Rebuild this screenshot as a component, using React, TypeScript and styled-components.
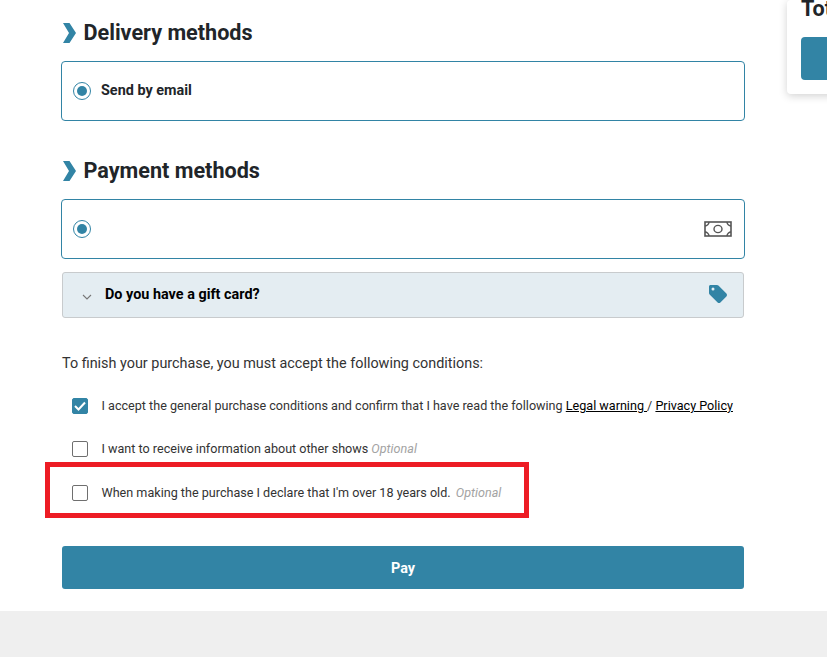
import React from 'react'
import styled, {createGlobalStyle} from 'styled-components'

const teal = '#3284a5'

const GlobalStyle = createGlobalStyle`
  html, body {
    margin: 0;
    padding: 0;
    background: #fff;
    overflow: hidden;
  }
  body {
    font-family: Roboto, 'Liberation Sans', sans-serif;
    color: #212529;
  }
`

const Page = styled.div`
  width: 827px;
  height: 657px;
  display: flex;
  flex-direction: column;
  overflow: hidden;
`

const Content = styled.div`
  height: 611px;
  display: flex;
  align-items: flex-start;
  padding-left: 61px;
  box-sizing: border-box;
  flex-shrink: 0;
`

const Main = styled.main`
  width: 684px;
  flex-shrink: 0;
  padding-top: 20px;
`

const Aside = styled.aside`
  width: 200px;
  height: 94px;
  flex-shrink: 0;
  margin-left: 42px;
  padding: 0 14px;
  box-sizing: border-box;
  background: #fff;
  border-radius: 4px;
  box-shadow: 0 2px 8px rgba(0, 0, 0, 0.18);
`

const TotalLabel = styled.div`
  font-size: 21.6px;
  font-weight: 700;
  line-height: 18px;
  color: #212529;
`

const TotalButton = styled.div`
  margin-top: 19px;
  height: 43px;
  border-radius: 4px;
  background: ${teal};
`

const Heading = styled.h2`
  margin: 0;
  height: 26px;
  display: flex;
  align-items: center;
  gap: 6.5px;
  font-size: 21.6px;
  line-height: 26px;
  font-weight: 700;
  color: #212529;
`

const Chevron = styled.svg`
  width: 15px;
  height: 20px;
  margin-left: 1px;
  flex-shrink: 0;
`

const OptionBox = styled.div`
  height: 60px;
  margin-top: 15px;
  padding: 0 12px 0 11px;
  display: flex;
  align-items: center;
  gap: 10px;
  box-sizing: border-box;
  border: 1px solid ${teal};
  border-radius: 4px;
`

const Radio = styled.span`
  width: 18px;
  height: 18px;
  flex-shrink: 0;
  display: flex;
  align-items: center;
  justify-content: center;
  box-sizing: border-box;
  border: 1px solid ${teal};
  border-radius: 50%;

  &::after {
    content: '';
    width: 10px;
    height: 10px;
    border-radius: 50%;
    background: ${teal};
  }
`

const OptionLabel = styled.span`
  margin-bottom: 2px;
  font-size: 14.4px;
  font-weight: 700;
  color: #212529;
`

const BillIcon = styled.svg`
  width: 28px;
  height: 16px;
  margin-left: auto;
  flex-shrink: 0;
`

const Section = styled.section`
  margin-top: 37px;
`

const GiftCard = styled.div`
  height: 46px;
  margin: 13px 1px 0;
  padding: 0 15px 0 19px;
  display: flex;
  align-items: center;
  box-sizing: border-box;
  background: #e4edf2;
  border: 1px solid #c8cbcd;
  border-radius: 3px;
`

const GiftToggle = styled.svg`
  width: 10px;
  height: 6px;
  margin-top: 3px;
  flex-shrink: 0;
`

const GiftLabel = styled.span`
  margin-left: 13px;
  margin-bottom: 2px;
  font-size: 14.4px;
  font-weight: 700;
  color: #000;
`

const TagIcon = styled.svg`
  width: 20px;
  height: 20px;
  margin-left: auto;
  margin-bottom: 3px;
  flex-shrink: 0;
`

const Intro = styled.p`
  margin: 37px 1px 0;
  font-size: 14.4px;
  line-height: 18px;
  color: #333;
`

const Conditions = styled.div`
  margin-top: 23.9px;
  padding-left: 11px;
  display: flex;
  flex-direction: column;
`

const ConditionRow = styled.div`
  position: relative;
  height: 18px;
  margin-bottom: 25.5px;
  display: flex;
  align-items: center;
  gap: 13.5px;
  font-size: 12.6px;
  line-height: 18px;
  color: #333;
  white-space: nowrap;
`

const Checkbox = styled.span<{$checked?: boolean}>`
  width: 16px;
  height: 16px;
  flex-shrink: 0;
  display: flex;
  align-items: center;
  justify-content: center;
  box-sizing: border-box;
  border-radius: 2px;
  border: 1px solid ${p => (p.$checked ? teal : '#6f6f6f')};
  background: ${p => (p.$checked ? teal : '#fff')};
`

const LegalLink = styled.a`
  color: #000;
  text-decoration: underline;
`

const Optional = styled.em`
  color: #a3a3a3;
  font-style: italic;
`

const Spaced = styled(Optional)`
  margin-left: 2px;
`

const Highlight = styled.div`
  position: absolute;
  left: -27px;
  top: -22px;
  width: 484px;
  height: 56px;
  box-sizing: border-box;
  border: 5px solid #ed1c24;
  pointer-events: none;
`

const PayButton = styled.button`
  display: block;
  width: 682px;
  height: 43px;
  margin: 18.3px 1px 0;
  padding: 2px 0 0;
  border: 0;
  border-radius: 3px;
  background: ${teal};
  color: #fff;
  font-family: inherit;
  font-size: 14.4px;
  font-weight: 700;
`

const Footer = styled.footer`
  flex: 1;
  background: #efefef;
`

const SectionChevron = () => (
  <Chevron viewBox="0 0 15 20">
    <path d="M1 0h6.500L14 10 7.500 20H1l6-10z" fill={teal}/>
  </Chevron>
)

const App = () => {
  return (
    <React.Fragment>
      <GlobalStyle/>
      <Page>
        <Content>
          <Main>
            <Heading><SectionChevron/>Delivery methods</Heading>
            <OptionBox>
              <Radio/>
              <OptionLabel>Send by email</OptionLabel>
            </OptionBox>

            <Section>
              <Heading><SectionChevron/>Payment methods</Heading>
              <OptionBox>
                <Radio/>
                <BillIcon viewBox="0 0 28 16" fill="none" stroke="#555">
                  <rect x="1" y="1" width="26" height="14" strokeWidth="1.6"/>
                  <ellipse cx="14" cy="8" rx="4" ry="3.6" strokeWidth="1.4"/>
                  <path d="M1 5c2 0 4-2 4-4M27 5c-2 0-4-2-4-4M1 11c2 0 4 2 4 4M27 11c-2 0-4 2-4 4" strokeWidth="1.4"/>
                </BillIcon>
              </OptionBox>
            </Section>

            <GiftCard>
              <GiftToggle viewBox="0 0 10 6" fill="none" stroke="#777" strokeWidth="1.1">
                <path d="M1 1l4 4 4-4"/>
              </GiftToggle>
              <GiftLabel>Do you have a gift card?</GiftLabel>
              <TagIcon viewBox="0 0 20 20">
                <path d="M1 2.500C1 1.700 1.700 1 2.500 1H9c.5 0 1 .2 1.400.6l8 8c.8.8.8 2 0 2.800l-6 6c-.8.8-2 .8-2.800 0l-8-8C1.200 10 1 9.500 1 9zM5 3.500a1.500 1.500 0 1 0 0 3 1.500 1.500 0 0 0 0-3z" fill={teal} fillRule="evenodd"/>
              </TagIcon>
            </GiftCard>

            <Intro>To finish your purchase, you must accept the following conditions:</Intro>

            <Conditions>
              <ConditionRow>
                <Checkbox $checked>
                  <svg width="12" height="10" viewBox="0 0 12 10" fill="none" stroke="#fff" strokeWidth="2">
                    <path d="M1 5l3.500 3.500L11 1.500"/>
                  </svg>
                </Checkbox>
                <span>
                  I accept the general purchase conditions and confirm that I have read the following{' '}
                  <LegalLink>Legal warning </LegalLink>/ <LegalLink>Privacy Policy</LegalLink>
                </span>
              </ConditionRow>
              <ConditionRow>
                <Checkbox/>
                <span>I want to receive information about other shows <Optional>Optional</Optional></span>
              </ConditionRow>
              <ConditionRow>
                <Checkbox/>
                <span>When making the purchase I declare that I'm over 18 years old. <Spaced>Optional</Spaced></span>
                <Highlight/>
              </ConditionRow>
            </Conditions>

            <PayButton>Pay</PayButton>
          </Main>
          <Aside>
            <TotalLabel>Total</TotalLabel>
            <TotalButton/>
          </Aside>
        </Content>
        <Footer/>
      </Page>
    </React.Fragment>
  )
}

export default App
